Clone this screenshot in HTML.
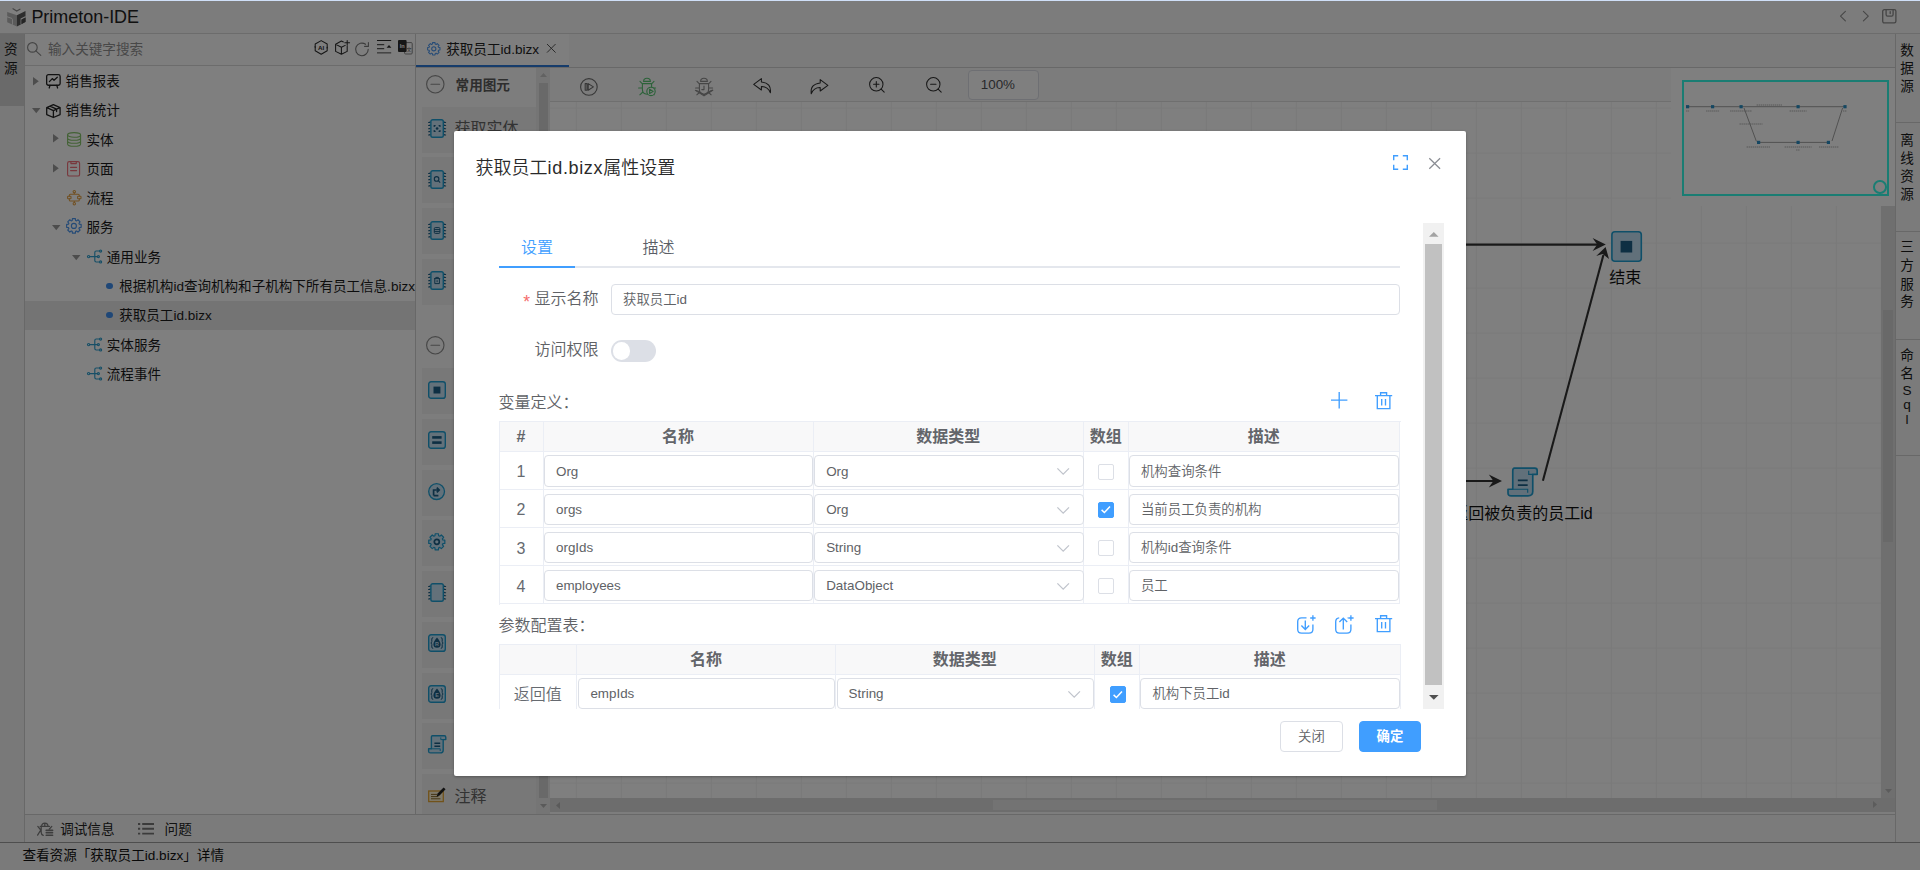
<!DOCTYPE html>
<html lang="zh-CN">
<head>
<meta charset="utf-8">
<title>Primeton-IDE</title>
<style>
*{box-sizing:border-box;margin:0;padding:0}
html,body{width:1920px;height:870px;overflow:hidden;background:#fff}
body{font-family:"Liberation Sans","Noto Sans CJK SC",sans-serif;font-size:13.6px;color:#333;position:relative}
.abs{position:absolute}
svg{display:block;overflow:visible}
/* ---------- base app ---------- */
#app{position:absolute;left:0;top:0;width:1920px;height:870px;background:#fff}
#topline{left:0;top:0;width:1920px;height:1px;background:#dfe9ff}
#titlebar{left:0;top:1px;width:1920px;height:33px;background:#f8f8f8;border-bottom:1px solid #d9d9d9}
#titlebar .name{left:31.4px;top:4px;font-size:17.95px;line-height:24px;color:#222;white-space:nowrap}
#lstrip{left:0;top:34px;width:25px;height:809px;background:#f3f3f3;border-right:1px solid #d0d0d0}
#lstrip .tab{left:-1px;top:0;width:25px;height:71.6px;background:#d5d5d5;text-align:center;font-size:13.6px;line-height:18.3px;padding-top:7.4px;color:#1a1a1a;padding-right:1.4px}
#tree{left:25px;top:34px;width:391px;height:781px;background:#fff;border-right:1px solid #d0d0d0}
#search{left:0;top:0;width:390px;height:32px;border-bottom:1px solid #d9d9d9;background:#fdfdfd}
#search .ph{left:23px;top:7.6px;font-size:13.6px;line-height:16px;color:#909090;white-space:nowrap}
.row{position:absolute;left:0;width:390px;height:29.3px;line-height:29.3px;white-space:nowrap;font-size:13.55px;color:#1a1a1a}
.row.sel{background:#e9e9e9}
.row .t{position:absolute;top:.9px}
.row .arr{position:absolute;top:0;width:0;height:0}
.row .ico{position:absolute}
.tri-r{width:0;height:0;border-left:6px solid #9a9a9a;border-top:4.5px solid transparent;border-bottom:4.5px solid transparent}
.tri-d{width:0;height:0;border-top:6px solid #9a9a9a;border-left:4.5px solid transparent;border-right:4.5px solid transparent}
.dot{position:absolute;width:6.7px;height:6.7px;border-radius:50%;background:#3f8fee}
#bottomtabs{left:25px;top:814px;width:1870px;height:29px;background:#f7f7f7;border-top:1px solid #d0d0d0}
#bottomtabs .t{position:absolute;top:5.8px;line-height:18px;font-size:13.6px;color:#222;white-space:nowrap}
#status{left:0;top:842px;width:1920px;height:28px;background:#f4f4f4;border-top:1.5px solid #9c9c9c}
#status .t{position:absolute;left:22.4px;top:4.4px;line-height:18px;font-size:13.6px;color:#111;white-space:nowrap}
#rstrip{left:1895px;top:34px;width:25px;height:809px;background:#f6f6f6;border-left:1px solid #d0d0d0}
#rstrip .v{position:absolute;left:1px;width:24px;text-align:center;font-size:13.6px;line-height:17.6px;color:#222}
#rstrip .sep{position:absolute;left:1px;width:24px;height:1px;background:#d0d0d0}
#edtabs{left:416px;top:34px;width:1479px;height:34px;background:#f6f6f6;border-bottom:1px solid #d0d0d0}
#edtabs .tab{position:absolute;left:0;top:0;width:153px;height:33px;background:#fdfdfd;border-bottom:2.5px solid #2d79d6}
#edtabs .tab .t{position:absolute;left:30.2px;top:6.8px;line-height:18px;font-size:13.6px;color:#222;white-space:nowrap}
#palette{left:416px;top:68px;width:120px;height:746px;background:#fafafa;overflow:hidden}
#palette .item{position:absolute;left:5.7px;width:120px;height:46px;background:#f1f1f1}
#palette .lbl{position:absolute;left:39px;font-size:14.5px;color:#444;white-space:nowrap;line-height:20px}
#pscroll{left:536px;top:68px;width:14.5px;height:746px;background:#ebebeb}
#pscroll .thumb{position:absolute;left:2.5px;top:14.5px;width:9.5px;height:715.5px;background:#d2d2d2}
#toolbar{left:550px;top:68px;width:1345px;height:33.5px;background:#f8f8f8;border-bottom:1px solid #dedede}
#canvas{left:550px;top:101.5px;width:1331px;height:696px;background-color:#fff;
 background-image:linear-gradient(to right,#f3f3f3 1px,transparent 1px),linear-gradient(to bottom,#f3f3f3 1px,transparent 1px);
 background-size:45px 45px;background-position:25.8px 5.6px}
#vscroll{left:1883px;top:101.5px;width:12px;height:696px;background:#ececec}
#hscroll{left:550px;top:797.5px;width:1333px;height:16.5px;background:#ececec}
#overlay{left:0;top:0;width:1920px;height:870px;background:rgba(0,0,0,.5)}
/* ---------- dialog ---------- */
#dlg{left:454px;top:131px;width:1012px;height:645px;background:#fff;border-radius:2px;box-shadow:0 1px 3px rgba(0,0,0,.3);font-family:"Liberation Sans","Noto Sans CJK SC",sans-serif}
#dlg .title{left:22px;top:22px;font-size:18px;line-height:26px;color:#222;white-space:nowrap;letter-spacing:0}
#dlg .pg{position:absolute;left:-454px;top:-131px;width:1920px;height:870px}
#dlg .pg{font-weight:350}
#dlg .pg *{position:absolute;white-space:nowrap}
.dtitle{left:475.6px;top:154.6px;font-size:18px;line-height:26px;color:#2a2a2a}
.dtab{font-size:16px;line-height:22px;top:236.5px;color:#5a5e66}
.dtab.on{color:#409eff}
.tabline{left:499px;top:266px;width:901px;height:2px;background:#e4e7ed}
.tabact{left:499px;top:265.8px;width:76px;height:2.6px;background:#409eff}
.flabel{font-size:16px;line-height:22px;color:#606266}
.inp{border:1px solid #dcdfe6;border-radius:4px;background:#fff;height:31.2px;font-size:13.4px;line-height:29.4px;color:#606266;padding-left:11px;overflow:hidden}
.switch{left:611px;top:340.3px;width:45px;height:21.4px;border-radius:11px;background:#dcdfe6}
.switch i{left:2px;top:2px;width:17.4px;height:17.4px;border-radius:50%;background:#fff}
#sc{left:490px;top:223px;width:933px;height:485.8px;overflow:hidden}
#sc .in{left:-490px;top:-223px;width:1920px;height:870px}
.sect{font-size:16px;line-height:22px;color:#606266;left:499px}
.tbl{background:#fff}
.vl{width:1px;background:#ebeef5;z-index:2}
.hl{height:1px;background:#ebeef5;z-index:2}
.th{background:#f8f8f9;border-right:1px solid #ebeef5;border-bottom:1px solid #ebeef5;font-weight:bold;font-size:16px;color:#63656a;text-align:center;line-height:31.4px;height:30.4px;top:0}
.td{border-right:1px solid #ebeef5;border-bottom:1px solid #ebeef5;font-size:16px;color:#666a70;text-align:center;padding-top:1.6px}
.cb{width:16.3px;height:16.3px;border:1px solid #dcdfe6;border-radius:2px;background:#fff}
.cb.on{background:#409eff;border-color:#409eff}
.btn{height:30.8px;border-radius:4px;font-size:13.4px;line-height:29px;text-align:center;top:721px}
.sbtrack{left:1423.2px;top:223px;width:20.6px;height:485.8px;background:#f1f1f1}
.sbthumb{left:1425.3px;top:244.2px;width:16.7px;height:440.8px;background:#c1c1c1}

</style>
</head>
<body>
<div id="app" class="abs">
    <div id="titlebar" class="abs"><div class="name abs">Primeton-IDE</div></div>
  <div id="lstrip" class="abs"><div class="tab abs">资<br>源</div></div>
  <div id="tree" class="abs">
    <div id="search" class="abs"><div class="ph abs">输入关键字搜索</div><svg class="abs" style="left:2.20px;top:8.40px" width="14.4" height="14" viewBox="0 0 14.4 14" fill="none" stroke-linecap="round" stroke-linejoin="round" stroke="#8a8a8a" stroke-width="1.15"><circle cx="5.4" cy="5.4" r="4.8"/><path d="M8.9 8.9L13.8 13.4"/></svg>
<svg class="abs" style="left:289.00px;top:5.80px" width="14.4" height="14.8" viewBox="0 0 14.4 14.8" fill="none" stroke-linecap="round" stroke-linejoin="round" stroke="#2a2a2a" stroke-width="1.05"><path d="M7.2 0.6L13.2 4V10.8L7.2 14.2L1.2 10.8V4Z"/><text x="7.2" y="9.6" font-size="6.2" font-weight="bold" text-anchor="middle" fill="#2a2a2a" stroke="none" font-family="Liberation Sans,sans-serif">AI</text><path d="M0.2 6.6L1.2 8.2L2.2 6.6ZM12.2 8.2L13.2 6.6L14.2 8.2Z" fill="#2a2a2a" stroke="none"/></svg>
<svg class="abs" style="left:309.80px;top:6.00px" width="14.6" height="14.8" viewBox="0 0 14.6 14.8" fill="none" stroke-linecap="round" stroke-linejoin="round" stroke="#2a2a2a" stroke-width="1.05"><path d="M8.4 1.9L6.4 1L0.6 4.2V11.4L6.4 14.2L12.2 11.4V6.2M0.8 4.4L6.4 7.2L10.2 5.4M6.4 7.2V14M12.2 0.4V5.2M9.8 2.8H14.6"/></svg>
<svg class="abs" style="left:330.40px;top:7.70px" width="14.4" height="14.2" viewBox="0 0 14.4 14.2" fill="none" stroke-linecap="round" stroke-linejoin="round" stroke="#787878" stroke-width="1.1"><path d="M13.2 7.4A6.3 6.3 0 1 1 10.6 2.3M13.4 0.6V4.4H9.6"/></svg>
<svg class="abs" style="left:352.00px;top:6.00px" width="14.4" height="14" viewBox="0 0 14.4 14" fill="none"><path d="M0 0.5H14.2" stroke="#2a2a2a" stroke-width="1"/><path d="M0 4.6H7.2M0 8.6H7.2" stroke="#555" stroke-width="1.1"/><path d="M0 12.8H14.2" stroke="#8a8a8a" stroke-width="1.6"/><path d="M9.6 7.7L12 5L14.4 7.7Z" fill="#2a2a2a"/></svg>
<svg class="abs" style="left:373.20px;top:6.00px" width="14.6" height="14.4" viewBox="0 0 14.6 14.4" ><rect x="6.6" y="2.6" width="7.6" height="11.4" rx="1" fill="#fff" stroke="#777" stroke-width=".9"/><rect x="0" y="0" width="8.6" height="12" rx="1" fill="#2c2c2c"/><text x="4.3" y="8.2" font-size="5.6" font-weight="bold" text-anchor="middle" fill="#fff" font-family="Liberation Sans,sans-serif">In</text><text x="10.9" y="11" font-size="5" text-anchor="middle" fill="#555" font-family="Liberation Sans,Noto Sans CJK SC,sans-serif">文</text></svg></div>
<div class="row" style="top:32.1px"><div class="t" style="left:40.6px">销售报表</div></div>
<svg class="abs" style="left:8.3px;top:43.0px" width="5.8" height="8.4" viewBox="0 0 5.8 8.4" ><path d="M0 0L5.8 4.2L0 8.4Z" fill="#9b9b9b"/></svg>
<svg class="abs" style="left:21.0px;top:39.5px" width="14.8" height="14.6" viewBox="0 0 14.8 14.6" fill="none" stroke-linecap="round" stroke-linejoin="round" stroke="#222" stroke-width="1.3"><rect x="0.65" y="0.65" width="13.5" height="10.6" rx="1.8"/><path d="M3.2 14L4 11.4M11.6 14L10.8 11.4M3.4 7.6L6.3 4.6L8 6.2L11.3 3.2"/></svg>
<div class="row" style="top:61.4px"><div class="t" style="left:40.6px">销售统计</div></div>
<svg class="abs" style="left:7.0px;top:74.0px" width="8.5" height="5.3" viewBox="0 0 8.5 5.3" ><path d="M0 0H8.5L4.25 5.3Z" fill="#9b9b9b"/></svg>
<svg class="abs" style="left:21.0px;top:69.8px" width="14.8" height="14.2" viewBox="0 0 14.8 14.2" fill="none" stroke-linecap="round" stroke-linejoin="round" stroke="#222" stroke-width="1.3"><path d="M7.4 0.7L14.1 3.6V10.6L7.4 13.5L0.7 10.6V3.6ZM0.9 3.7L7.4 6.6L13.9 3.7M7.4 6.6V13.3M3.9 2.2L10.6 5.2V7.6"/></svg>
<div class="row" style="top:90.7px"><div class="t" style="left:61.5px">实体</div></div>
<svg class="abs" style="left:28.4px;top:100.2px" width="5.8" height="8.4" viewBox="0 0 5.8 8.4" ><path d="M0 0L5.8 4.2L0 8.4Z" fill="#9b9b9b"/></svg>
<svg class="abs" style="left:41.9px;top:97.9px" width="14.2" height="14.8" viewBox="0 0 14.2 14.8" fill="none" stroke-linecap="round" stroke-linejoin="round" stroke="#86c46a" stroke-width="1.1"><ellipse cx="7.1" cy="2.9" rx="6.5" ry="2.3"/><path d="M0.6 2.9V11.9C0.6 13.2 3.5 14.2 7.1 14.2S13.6 13.2 13.6 11.9V2.9M0.6 5.9C0.6 7.2 3.5 8.2 7.1 8.2S13.6 7.2 13.6 5.9M0.6 8.9C0.6 10.2 3.5 11.2 7.1 11.2S13.6 10.2 13.6 8.9"/></svg>
<div class="row" style="top:120.0px"><div class="t" style="left:61.5px">页面</div></div>
<svg class="abs" style="left:28.4px;top:129.6px" width="5.8" height="8.4" viewBox="0 0 5.8 8.4" ><path d="M0 0L5.8 4.2L0 8.4Z" fill="#9b9b9b"/></svg>
<svg class="abs" style="left:42.2px;top:126.8px" width="13.2" height="15.6" viewBox="0 0 13.2 15.6" fill="none" stroke-linecap="round" stroke-linejoin="round" stroke="#f0707a" stroke-width="1.15"><rect x="0.6" y="0.6" width="12" height="14.4" rx="1.6"/><path d="M3.9 0.8V2.6H9.3V0.8M3.6 6.4H9.6M3.6 9.6H9.6"/></svg>
<div class="row" style="top:149.3px"><div class="t" style="left:61.5px">流程</div></div>
<svg class="abs" style="left:41.6px;top:156.1px" width="14.6" height="15.4" viewBox="0 0 14.6 15.4" fill="none" stroke-linecap="round" stroke-linejoin="round" stroke="#e3a043" stroke-width="1.05"><circle cx="7.3" cy="1.7" r="1.2"/><circle cx="7.3" cy="13.8" r="1.2"/><rect x="0.6" y="6.2" width="3.4" height="2.6" rx=".6"/><rect x="10.6" y="6.2" width="3.4" height="2.6" rx=".6"/><path d="M7.3 2.9V4.2M7.3 12.6V11.2M2.3 6.2V5.4Q2.3 4.3 3.4 4.3H11.2Q12.3 4.3 12.3 5.4V6.2M2.3 8.8V10Q2.3 11.1 3.4 11.1H11.2Q12.3 11.1 12.3 10V8.8"/></svg>
<div class="row" style="top:178.6px"><div class="t" style="left:61.5px">服务</div></div>
<svg class="abs" style="left:27.1px;top:191.2px" width="8.5" height="5.3" viewBox="0 0 8.5 5.3" ><path d="M0 0H8.5L4.25 5.3Z" fill="#9b9b9b"/></svg>
<svg class="abs" style="left:41.0px;top:184.4px" width="15.8" height="15.8" viewBox="0 0 15.8 15.8" fill="none" stroke-linecap="round" stroke-linejoin="round" stroke="#4b96ee" stroke-width="1.15"><path d="M6.22 2.45L6.43 0.65L9.37 0.65L9.58 2.45L10.56 2.86L11.99 1.73L14.07 3.81L12.94 5.24L13.35 6.22L15.15 6.43L15.15 9.37L13.35 9.58L12.94 10.56L14.07 11.99L11.99 14.07L10.56 12.94L9.58 13.35L9.37 15.15L6.43 15.15L6.22 13.35L5.24 12.94L3.81 14.07L1.73 11.99L2.86 10.56L2.45 9.58L0.65 9.37L0.65 6.43L2.45 6.22L2.86 5.24L1.73 3.81L3.81 1.73L5.24 2.86Z"/><circle cx="7.9" cy="7.9" r="2.5"/></svg>
<div class="row" style="top:207.9px"><div class="t" style="left:81.8px">通用业务</div></div>
<svg class="abs" style="left:47.0px;top:220.5px" width="8.5" height="5.3" viewBox="0 0 8.5 5.3" ><path d="M0 0H8.5L4.25 5.3Z" fill="#9b9b9b"/></svg>
<svg class="abs" style="left:62.0px;top:215.0px" width="15.2" height="15" viewBox="0 0 15.2 15" fill="none" stroke-linecap="round" stroke-linejoin="round" stroke="#2f9fce" stroke-width="1.15"><circle cx="1.6" cy="7.6" r="1.15"/><circle cx="13.6" cy="2" r="1.05"/><circle cx="11.4" cy="7.6" r="1.05"/><circle cx="13.6" cy="13" r="1.05"/><path d="M2.8 7.6H10.3M7.8 7.6V3.4Q7.8 2 9.2 2H12.5M7.8 7.6V11.6Q7.8 13 9.2 13H12.5"/></svg>
<div class="row" style="top:237.2px"><div class="t" style="left:94.2px">根据机构id查询机构和子机构下所有员工信息.bizx</div></div>
<div class="dot" style="left:81.0px;top:248.5px"></div>
<div class="row sel" style="top:266.5px"><div class="t" style="left:94.2px">获取员工id.bizx</div></div>
<div class="dot" style="left:81.0px;top:277.8px"></div>
<div class="row" style="top:295.8px"><div class="t" style="left:81.8px">实体服务</div></div>
<svg class="abs" style="left:62.0px;top:302.8px" width="15.2" height="15" viewBox="0 0 15.2 15" fill="none" stroke-linecap="round" stroke-linejoin="round" stroke="#2f9fce" stroke-width="1.15"><circle cx="1.6" cy="7.6" r="1.15"/><circle cx="13.6" cy="2" r="1.05"/><circle cx="11.4" cy="7.6" r="1.05"/><circle cx="13.6" cy="13" r="1.05"/><path d="M2.8 7.6H10.3M7.8 7.6V3.4Q7.8 2 9.2 2H12.5M7.8 7.6V11.6Q7.8 13 9.2 13H12.5"/></svg>
<div class="row" style="top:325.1px"><div class="t" style="left:81.8px">流程事件</div></div>
<svg class="abs" style="left:62.0px;top:332.1px" width="15.2" height="15" viewBox="0 0 15.2 15" fill="none" stroke-linecap="round" stroke-linejoin="round" stroke="#2f9fce" stroke-width="1.15"><circle cx="1.6" cy="7.6" r="1.15"/><circle cx="13.6" cy="2" r="1.05"/><circle cx="11.4" cy="7.6" r="1.05"/><circle cx="13.6" cy="13" r="1.05"/><path d="M2.8 7.6H10.3M7.8 7.6V3.4Q7.8 2 9.2 2H12.5M7.8 7.6V11.6Q7.8 13 9.2 13H12.5"/></svg>
  </div>
  <div id="edtabs" class="abs"><div class="tab"><div class="t">获取员工id.bizx</div></div></div>
  <div id="palette" class="abs"><svg class="abs" style="left:10.10px;top:6.90px" width="18.6" height="18.6" viewBox="0 0 18.6 18.6" fill="none" stroke-linecap="round" stroke-linejoin="round" stroke="#8e8e8e" stroke-width="1.15"><circle cx="9.3" cy="9.3" r="8.7"/><path d="M5 9.3H13.6"/></svg>
<div class="abs" style="left:39.6px;top:7.6px;font-size:13.6px;font-weight:bold;color:#5c5c5c;line-height:20px;white-space:nowrap">常用图元</div>
<div class="item" style="top:38.6px;height:46.0px"></div>
<svg class="abs" style="left:11.60px;top:51.10px" width="18.2" height="19" viewBox="0 0 18.2 19" ><g fill="#1c5f86"><path d="M0 3.20L2.6 2.20V3.90H0.2Z"/><path d="M18.2 3.20L15.6 2.20V3.90H18Z"/><path d="M0 6.33L2.6 5.33V7.03H0.2Z"/><path d="M18.2 6.33L15.6 5.33V7.03H18Z"/><path d="M0 9.46L2.6 8.46V10.16H0.2Z"/><path d="M18.2 9.46L15.6 8.46V10.16H18Z"/><path d="M0 12.59L2.6 11.59V13.29H0.2Z"/><path d="M18.2 12.59L15.6 11.59V13.29H18Z"/><path d="M0 15.72L2.6 14.72V16.42H0.2Z"/><path d="M18.2 15.72L15.6 14.72V16.42H18Z"/></g><rect x="2.9" y="0.7" width="12.4" height="17.6" rx="1.8" fill="#c6e2f4" stroke="#1f9fd2" stroke-width="1.4"/><g fill="none" stroke="#1c5f86" stroke-width="1.1"><path d="M6.2 8V6.6H7.6M10.6 6.6H12V8M12 11V12.4H10.6M7.6 12.4H6.2V11"/></g><circle cx="9.1" cy="9.5" r="1.3" fill="#1c5f86"/></svg>
<div class="item" style="top:89.3px;height:46.0px"></div>
<svg class="abs" style="left:11.60px;top:101.80px" width="18.2" height="19" viewBox="0 0 18.2 19" ><g fill="#1c5f86"><path d="M0 3.20L2.6 2.20V3.90H0.2Z"/><path d="M18.2 3.20L15.6 2.20V3.90H18Z"/><path d="M0 6.33L2.6 5.33V7.03H0.2Z"/><path d="M18.2 6.33L15.6 5.33V7.03H18Z"/><path d="M0 9.46L2.6 8.46V10.16H0.2Z"/><path d="M18.2 9.46L15.6 8.46V10.16H18Z"/><path d="M0 12.59L2.6 11.59V13.29H0.2Z"/><path d="M18.2 12.59L15.6 11.59V13.29H18Z"/><path d="M0 15.72L2.6 14.72V16.42H0.2Z"/><path d="M18.2 15.72L15.6 14.72V16.42H18Z"/></g><rect x="2.9" y="0.7" width="12.4" height="17.6" rx="1.8" fill="#c6e2f4" stroke="#1f9fd2" stroke-width="1.4"/><g fill="none" stroke="#1c5f86" stroke-width="1.1"><circle cx="8.6" cy="8.9" r="2.3"/><path d="M10.3 10.7L12.2 12.6"/></g></svg>
<div class="item" style="top:140.0px;height:46.0px"></div>
<svg class="abs" style="left:11.60px;top:152.50px" width="18.2" height="19" viewBox="0 0 18.2 19" ><g fill="#1c5f86"><path d="M0 3.20L2.6 2.20V3.90H0.2Z"/><path d="M18.2 3.20L15.6 2.20V3.90H18Z"/><path d="M0 6.33L2.6 5.33V7.03H0.2Z"/><path d="M18.2 6.33L15.6 5.33V7.03H18Z"/><path d="M0 9.46L2.6 8.46V10.16H0.2Z"/><path d="M18.2 9.46L15.6 8.46V10.16H18Z"/><path d="M0 12.59L2.6 11.59V13.29H0.2Z"/><path d="M18.2 12.59L15.6 11.59V13.29H18Z"/><path d="M0 15.72L2.6 14.72V16.42H0.2Z"/><path d="M18.2 15.72L15.6 14.72V16.42H18Z"/></g><rect x="2.9" y="0.7" width="12.4" height="17.6" rx="1.8" fill="#c6e2f4" stroke="#1f9fd2" stroke-width="1.4"/><g fill="none" stroke="#1c5f86" stroke-width="1"><rect x="6.3" y="6.6" width="5.6" height="5.8" rx="1"/><path d="M6.3 8.6H11.9M6.3 10.6H11.9"/></g></svg>
<div class="item" style="top:190.7px;height:46.0px"></div>
<svg class="abs" style="left:11.60px;top:203.20px" width="18.2" height="19" viewBox="0 0 18.2 19" ><g fill="#1c5f86"><path d="M0 3.20L2.6 2.20V3.90H0.2Z"/><path d="M18.2 3.20L15.6 2.20V3.90H18Z"/><path d="M0 6.33L2.6 5.33V7.03H0.2Z"/><path d="M18.2 6.33L15.6 5.33V7.03H18Z"/><path d="M0 9.46L2.6 8.46V10.16H0.2Z"/><path d="M18.2 9.46L15.6 8.46V10.16H18Z"/><path d="M0 12.59L2.6 11.59V13.29H0.2Z"/><path d="M18.2 12.59L15.6 11.59V13.29H18Z"/><path d="M0 15.72L2.6 14.72V16.42H0.2Z"/><path d="M18.2 15.72L15.6 14.72V16.42H18Z"/></g><rect x="2.9" y="0.7" width="12.4" height="17.6" rx="1.8" fill="#c6e2f4" stroke="#1f9fd2" stroke-width="1.4"/><g fill="none" stroke="#1c5f86" stroke-width="1"><path d="M6 7.6H12.2M7.8 7.4V6.4H10.4V7.4M6.8 7.8V12.6H11.4V7.8M9.1 9.2V11.2"/></g></svg>
<div class="lbl" style="left:38.6px;top:51.2px;font-size:16px;color:#666">获取实体</div>
<svg class="abs" style="left:9.90px;top:267.70px" width="18.6" height="18.6" viewBox="0 0 18.6 18.6" fill="none" stroke-linecap="round" stroke-linejoin="round" stroke="#8e8e8e" stroke-width="1.15"><circle cx="9.3" cy="9.3" r="8.7"/><path d="M5 9.3H13.6"/></svg>
<div class="item" style="top:300.3px;height:46.0px"></div>
<div class="item" style="top:351.0px;height:46.0px"></div>
<div class="item" style="top:401.7px;height:46.0px"></div>
<div class="item" style="top:452.4px;height:46.0px"></div>
<div class="item" style="top:503.1px;height:46.0px"></div>
<div class="item" style="top:553.8px;height:46.0px"></div>
<div class="item" style="top:604.5px;height:46.0px"></div>
<div class="item" style="top:655.2px;height:46.0px"></div>
<div class="item" style="top:705.9px;height:46.0px"></div>
<svg class="abs" style="left:11.70px;top:312.70px" width="18" height="18" viewBox="0 0 18 18" ><rect x="0.7" y="0.7" width="16.6" height="16.6" rx="2.4" fill="#c6e2f4" stroke="#1f9fd2" stroke-width="1.4"/><rect x="5.5" y="5.6" width="6.9" height="6.9" fill="#1c5f86"/></svg>
<svg class="abs" style="left:11.70px;top:363.40px" width="18" height="18" viewBox="0 0 18 18" ><rect x="0.7" y="0.7" width="16.6" height="16.6" rx="2.4" fill="#c6e2f4" stroke="#1f9fd2" stroke-width="1.4"/><rect x="4.2" y="5.1" width="9.4" height="2.6" fill="#1c5f86"/><rect x="4.2" y="10.3" width="9.4" height="2.6" fill="#1c5f86"/></svg>
<svg class="abs" style="left:12.00px;top:414.50px" width="17.2" height="17.2" viewBox="0 0 17.2 17.2" ><circle cx="8.6" cy="8.6" r="7.9" fill="#c6e2f4" stroke="#1f9fd2" stroke-width="1.3"/><path d="M5.6 12.6V7H10.2M8.8 4.6L11.2 7L8.8 9.4M5.6 12.6H10.4" fill="none" stroke="#1c5f86" stroke-width="1.7"/></svg>
<svg class="abs" style="left:11.80px;top:465.00px" width="17.6" height="17.6" viewBox="0 0 17.6 17.6" ><path d="M6.94 2.78L7.17 0.76L10.43 0.76L10.66 2.78L11.74 3.23L13.33 1.97L15.63 4.27L14.37 5.86L14.82 6.94L16.84 7.17L16.84 10.43L14.82 10.66L14.37 11.74L15.63 13.33L13.33 15.63L11.74 14.37L10.66 14.82L10.43 16.84L7.17 16.84L6.94 14.82L5.86 14.37L4.27 15.63L1.97 13.33L3.23 11.74L2.78 10.66L0.76 10.43L0.76 7.17L2.78 6.94L3.23 5.86L1.97 4.27L4.27 1.97L5.86 3.23Z" fill="#c6e2f4" stroke="#1f9fd2" stroke-width="1.2" stroke-linejoin="round"/><circle cx="8.8" cy="8.8" r="2.5" fill="#c6e2f4" stroke="#1c5f86" stroke-width="1.7"/></svg>
<svg class="abs" style="left:11.60px;top:515.10px" width="18.2" height="19" viewBox="0 0 18.2 19" ><g fill="#1c5f86"><path d="M0 3.20L2.6 2.20V3.90H0.2Z"/><path d="M18.2 3.20L15.6 2.20V3.90H18Z"/><path d="M0 6.33L2.6 5.33V7.03H0.2Z"/><path d="M18.2 6.33L15.6 5.33V7.03H18Z"/><path d="M0 9.46L2.6 8.46V10.16H0.2Z"/><path d="M18.2 9.46L15.6 8.46V10.16H18Z"/><path d="M0 12.59L2.6 11.59V13.29H0.2Z"/><path d="M18.2 12.59L15.6 11.59V13.29H18Z"/><path d="M0 15.72L2.6 14.72V16.42H0.2Z"/><path d="M18.2 15.72L15.6 14.72V16.42H18Z"/></g><rect x="2.9" y="0.7" width="12.4" height="17.6" rx="1.8" fill="#c6e2f4" stroke="#1f9fd2" stroke-width="1.4"/></svg>
<svg class="abs" style="left:11.70px;top:566.00px" width="18" height="18" viewBox="0 0 18 18" ><rect x="0.7" y="0.7" width="16.6" height="16.6" rx="2.4" fill="#c6e2f4" stroke="#1f9fd2" stroke-width="1.4"/><g fill="none" stroke="#1c5f86" stroke-width="1"><path d="M5.2 3.6Q3.8 3.6 3.8 5V7.6Q3.8 9 2.8 9Q3.8 9 3.8 10.4V13Q3.8 14.4 5.2 14.4M12.8 3.6Q14.2 3.6 14.2 5V7.6Q14.2 9 15.2 9Q14.2 9 14.2 10.4V13Q14.2 14.4 12.8 14.4"/></g><path d="M9 3.4C11 6 12.6 8 12.6 10.2A3.6 3.6 0 0 1 5.4 10.2C5.4 8 7 6 9 3.4Z" fill="#1c5f86"/><text x="9" y="12.4" font-size="5.4" font-weight="bold" text-anchor="middle" fill="#c6e2f4" font-family="Liberation Sans,sans-serif">R</text></svg>
<svg class="abs" style="left:11.70px;top:616.50px" width="18" height="18" viewBox="0 0 18 18" ><rect x="0.7" y="0.7" width="16.6" height="16.6" rx="2.4" fill="#c6e2f4" stroke="#1f9fd2" stroke-width="1.4"/><g fill="none" stroke="#1c5f86" stroke-width="1"><path d="M5.2 3.6Q3.8 3.6 3.8 5V7.6Q3.8 9 2.8 9Q3.8 9 3.8 10.4V13Q3.8 14.4 5.2 14.4M12.8 3.6Q14.2 3.6 14.2 5V7.6Q14.2 9 15.2 9Q14.2 9 14.2 10.4V13Q14.2 14.4 12.8 14.4"/></g><path d="M9 3.4C11 6 12.6 8 12.6 10.2A3.6 3.6 0 0 1 5.4 10.2C5.4 8 7 6 9 3.4Z" fill="#1c5f86"/><text x="9" y="12.4" font-size="5.4" font-weight="bold" text-anchor="middle" fill="#c6e2f4" font-family="Liberation Sans,sans-serif">E</text></svg>
<svg class="abs" style="left:11.80px;top:667.00px" width="18.4" height="18.6" viewBox="0 0 18.4 18.6" ><path d="M4.4 0.7H16.4Q17.8 0.7 17.8 2.2V4.6H15.2V15.2Q15.2 17.9 12.4 17.9H2.4Q0.6 17.9 0.6 16.2V13.8H3.4V2.4Q3.4 0.7 4.4 0.7Z" fill="#c6e2f4" stroke="#1f9fd2" stroke-width="1.4" stroke-linejoin="round"/><path d="M3.4 13.8H12.2V16M15.2 4.6H12.8V2.4" fill="none" stroke="#1f9fd2" stroke-width="1"/><path d="M6.4 8.3H12.2M6.4 11.2H12.2" stroke="#1c5f86" stroke-width="1.4"/></svg>
<svg class="abs" style="left:11.50px;top:719.20px" width="18.2" height="15.4" viewBox="0 0 18.2 15.4" ><rect x="0.7" y="4" width="14.6" height="10.6" fill="#fdf3d4" stroke="#e3a535" stroke-width="1.3"/><path d="M3 7.4H9M3 9.6H10.4M3 11.8H12.4" stroke="#8a6a2a" stroke-width="1"/><path d="M8.6 9.6L9.6 6.6L15.6 0.4L17.6 2.2L11.6 8.6Z" fill="#222"/></svg>
<div class="lbl" style="left:38.6px;top:719.0px;font-size:16px;color:#666">注释</div></div>
  <div id="pscroll" class="abs"><div class="thumb"></div></div>
  <div id="toolbar" class="abs"><svg class="abs" style="left:30.00px;top:10.00px" width="17.8" height="17.8" viewBox="0 0 17.8 17.8" fill="none" stroke-linecap="round" stroke-linejoin="round" stroke="#6e6e6e" stroke-width="1.1"><circle cx="8.9" cy="8.9" r="8.3"/><path d="M5.2 5.6V12.2H7V5.6ZM8.2 5.6V12.2L13.4 8.9Z"/></svg>
<svg class="abs" style="left:88.10px;top:9.90px" width="18.2" height="18.2" viewBox="0 0 18.2 18.2" fill="none" stroke-linecap="round" stroke-linejoin="round" stroke="#58c472" stroke-width="1.1"><path d="M5.6 3.4A3.4 3.2 0 0 1 12.4 3.4ZM4.4 5.6H13.6V11.6Q13.6 16.2 9 16.2Q4.4 16.2 4.4 11.6ZM2 3.4L4.4 5.8M16 3.4L13.6 5.8M0.6 10H4.4M17.6 10H13.6M1.8 16.8L4.9 14M16.2 16.8L13.1 14"/><circle cx="13" cy="13.4" r="4.2" fill="#f8f8f8"/><path d="M11.6 11.2V15.6L15.2 13.4Z"/></svg>
<svg class="abs" style="left:145.00px;top:9.90px" width="18.2" height="18.2" viewBox="0 0 18.2 18.2" fill="none" stroke-linecap="round" stroke-linejoin="round" stroke="#8c8c8c" stroke-width="1.1"><path d="M5.6 3.4A3.4 3.2 0 0 1 12.4 3.4ZM4.4 5.6H13.6V11.6Q13.6 16.2 9 16.2Q4.4 16.2 4.4 11.6ZM2 3.4L4.4 5.8M16 3.4L13.6 5.8M0.6 10H4.4M17.6 10H13.6M1.8 16.8L4.9 14M16.2 16.8L13.1 14"/><path d="M9 8V11.6H6.8M1.2 12.6L4 13.6L9 16.8L15.8 12.8L17.2 12.2" /><path d="M0.4 12.4L9 17.9L17.8 12.2" stroke="#8c8c8c"/></svg>
<svg class="abs" style="left:202.50px;top:10.40px" width="18.8" height="15.6" viewBox="0 0 18.8 15.6" fill="none" stroke-linecap="round" stroke-linejoin="round" stroke="#2e2e2e" stroke-width="1.05"><path d="M8.4 0.6L0.7 6.4L8.4 12V8.6Q14.6 8.4 17.4 14.8Q18.6 5 8.4 3.9Z"/></svg>
<svg class="abs" style="left:259.60px;top:11.40px" width="18.6" height="15.4" viewBox="0 0 18.6 15.4" fill="none" stroke-linecap="round" stroke-linejoin="round" stroke="#2e2e2e" stroke-width="1.05"><path d="M10.2 0.6L17.9 6.4L10.2 12V8.6Q4 8.4 1.2 14.8Q0 5 10.2 3.9Z"/></svg>
<svg class="abs" style="left:318.50px;top:9.30px" width="15.6" height="15.6" viewBox="0 0 15.6 15.6" fill="none" stroke-linecap="round" stroke-linejoin="round" stroke="#2e2e2e" stroke-width="1.05"><circle cx="7.3" cy="7.3" r="6.7"/><path d="M11.9 12L15.2 15.2M4.6 7.3H10M7.3 4.6V10"/></svg>
<svg class="abs" style="left:376.30px;top:9.30px" width="15.6" height="15.6" viewBox="0 0 15.6 15.6" fill="none" stroke-linecap="round" stroke-linejoin="round" stroke="#2e2e2e" stroke-width="1.05"><circle cx="7.3" cy="7.3" r="6.7"/><path d="M11.9 12L15.2 15.2M4.6 7.3H10"/></svg>
<div class="abs" style="left:418.4px;top:1.5px;width:71px;height:30px;border:1px solid #dcdfe6;border-radius:4px;background:#fff;font-size:13.4px;line-height:28.6px;color:#505256;padding-left:11.4px">100%</div></div>
  <div id="canvas" class="abs"><svg class="abs" style="left:0;top:0" width="1333" height="696" viewBox="0 0 1333 696"><path d="M890.0 142.6 L1048.0 142.6" stroke="#333" stroke-width="2.1" fill="none"/><path d="M1055.8 142.6 L1042.6 136.1 L1047.2 142.6 L1042.6 149.1 Z" fill="#333"/><path d="M992.9 378.8 L1053.4 153.1" stroke="#333" stroke-width="2.1" fill="none"/><path d="M1055.6 145.1 L1046.2 153.9 L1052.6 151.9 L1059.0 156.9 Z" fill="#333"/><path d="M890.0 379.0 L944.0 379.0" stroke="#333" stroke-width="2.1" fill="none"/><path d="M952.0 379.0 L938.8 372.5 L943.4 379.0 L938.8 385.5 Z" fill="#333"/><rect x="1061.9" y="129.7" width="29.4" height="29.6" rx="3" fill="#c3e0f4" stroke="#1f9fd2" stroke-width="1.6"/><rect x="1070.6" y="138.9" width="11.6" height="11.6" fill="#1c5f86"/></svg>
<svg class="abs" style="left:956.90px;top:365.60px" width="31.2" height="30" viewBox="0 0 18.4 18.6" preserveAspectRatio="none"><path d="M4.4 0.7H16.4Q17.8 0.7 17.8 2.2V4.6H15.2V15.2Q15.2 17.9 12.4 17.9H2.4Q0.6 17.9 0.6 16.2V13.8H3.4V2.4Q3.4 0.7 4.4 0.7Z" fill="#c3e0f4" stroke="#1f9fd2" stroke-width="1" stroke-linejoin="round"/><path d="M3.4 13.8H12.2V16M15.2 4.6H12.8V2.4" fill="none" stroke="#1f9fd2" stroke-width=".7"/><path d="M6.4 8.3H12.2M6.4 11.2H12.2" stroke="#1c5f86" stroke-width="1.1"/></svg>
<div class="abs" style="left:1059.2px;top:165.5px;font-size:16px;line-height:22px;color:#111;white-space:nowrap">结束</div>
<div class="abs" style="right:288.4px;top:401.9px;font-size:16px;line-height:22px;color:#111;white-space:nowrap">返回被负责的员工id</div></div>
      <div id="rstrip" class="abs"></div>
  <div id="bottomtabs" class="abs"><div class="t" style="left:35.2px">调试信息</div><div class="t" style="left:139.6px">问题</div></div>
  <div id="status" class="abs"><div class="t">查看资源「获取员工id.bizx」详情</div></div>
<svg class="abs" style="left:6.60px;top:7.00px" width="19" height="20" viewBox="0 0 19 20" ><path d="M0.3 4.6L9.8 0.4L18.4 3.8L9.95 8.2Z" fill="#ffffff"/><path d="M5.6 1.4L9.7 4.1L13.4 1.9" fill="none" stroke="#8c8c8c" stroke-width="1.2"/><path d="M0.2 5L9.95 8.3V19.5L0.2 15.3Z" fill="#b6b6b6"/><path d="M0 9.2L5.2 11V12.1L0 10.3Z" fill="#f8f8f8"/><path d="M5.1 12L6 12.4V17.8L5.1 17.4Z" fill="#f8f8f8"/><path d="M9.95 8.3L18.5 4V14.9L9.95 19.5Z" fill="#5a5a5a"/><path d="M13.6 11.4L18.6 8.9V10.3L14.4 12.4V16.9L13.6 17.3Z" fill="#f8f8f8"/><path d="M14.6 12.8L18.5 10.8V14.8L14.6 16.9Z" fill="#4a4a4a"/></svg>
<svg class="abs" style="left:1839.60px;top:10.80px" width="5.8" height="10.2" viewBox="0 0 5.8 10.2" fill="none" stroke-linecap="round" stroke-linejoin="round" stroke="#8e8e8e" stroke-width="1.1"><path d="M5.4 0.3L0.5 5.1L5.4 9.9"/></svg>
<svg class="abs" style="left:1862.60px;top:10.80px" width="5.8" height="10.2" viewBox="0 0 5.8 10.2" fill="none" stroke-linecap="round" stroke-linejoin="round" stroke="#8e8e8e" stroke-width="1.1"><path d="M0.4 0.3L5.3 5.1L0.4 9.9"/></svg>
<svg class="abs" style="left:1882.40px;top:8.90px" width="14.6" height="14.6" viewBox="0 0 14.6 14.6" fill="none" stroke-linecap="round" stroke-linejoin="round" stroke="#8a8a8a" stroke-width="1.3"><rect x="0.7" y="0.7" width="13.2" height="13.2" rx="1.6"/><path d="M4.1 0.9V5.4Q4.1 7.1 5.6 7.1H9.6Q11.1 7.1 11.1 5.4V0.9M8.2 2.6V4.6"/></svg>
<svg class="abs" style="left:427.00px;top:41.60px" width="13.6" height="13.6" viewBox="0 0 13.6 13.6" fill="none" stroke-linecap="round" stroke-linejoin="round" stroke="#4b96ee" stroke-width="1.05"><path d="M5.35 2.12L5.55 0.63L8.05 0.63L8.25 2.12L9.09 2.47L10.28 1.55L12.05 3.32L11.13 4.51L11.48 5.35L12.97 5.55L12.97 8.05L11.48 8.25L11.13 9.09L12.05 10.28L10.28 12.05L9.09 11.13L8.25 11.48L8.05 12.97L5.55 12.97L5.35 11.48L4.51 11.13L3.32 12.05L1.55 10.28L2.47 9.09L2.12 8.25L0.63 8.05L0.63 5.55L2.12 5.35L2.47 4.51L1.55 3.32L3.32 1.55L4.51 2.47Z"/><circle cx="6.8" cy="6.8" r="2.1"/></svg>
<svg class="abs" style="left:547.00px;top:44.20px" width="8.6" height="8.6" viewBox="0 0 8.6 8.6" fill="none" stroke-linecap="round" stroke-linejoin="round" stroke="#555" stroke-width="1"><path d="M0.3 0.3L8.3 8.3M8.3 0.3L0.3 8.3"/></svg>
<div class="abs" style="left:1671px;top:68px;width:224px;height:137.5px;background:#fff"></div>
<div class="abs" style="left:1682px;top:80px;width:207px;height:116px;border:2px solid #34fbe6"></div>
<div class="abs" style="left:1873px;top:180.2px;width:13.6px;height:13.6px;border:2px solid #34fbe6;border-radius:50%;background:#fff"></div>
<svg class="abs" style="left:0;top:0" width="1920" height="220" viewBox="0 0 1920 220"><path d="M1688 106.7H1845M1744 108L1756.4 141.4M1759 142.4H1828M1832 141L1842.6 108" fill="none" stroke="#555" stroke-width=".55"/><rect x="1686.0" y="105.1" width="3.2" height="3.2" fill="#2a8fc4"/><rect x="1711.0" y="105.1" width="3.2" height="3.2" fill="#2a8fc4"/><rect x="1739.5" y="105.1" width="3.2" height="3.2" fill="#2a8fc4"/><rect x="1796.5" y="105.1" width="3.2" height="3.2" fill="#2a8fc4"/><rect x="1843.4" y="105.1" width="3.2" height="3.2" fill="#2a8fc4"/><rect x="1757.0" y="140.8" width="3.2" height="3.2" fill="#2a8fc4"/><rect x="1796.5" y="140.8" width="3.2" height="3.2" fill="#2a8fc4"/><rect x="1826.8" y="140.8" width="3.2" height="3.2" fill="#2a8fc4"/><path d="M1686.1 111.0H1689.1" stroke="#999" stroke-width=".8" stroke-dasharray="1.4 .6"/><path d="M1706.1 111.0H1719.1" stroke="#999" stroke-width=".8" stroke-dasharray="1.4 .6"/><path d="M1730.1 111.0H1752.1" stroke="#999" stroke-width=".8" stroke-dasharray="1.4 .6"/><path d="M1789.6 111.0H1806.6" stroke="#999" stroke-width=".8" stroke-dasharray="1.4 .6"/><path d="M1843.0 111.0H1847.0" stroke="#999" stroke-width=".8" stroke-dasharray="1.4 .6"/><path d="M1746.6 147.0H1770.6" stroke="#999" stroke-width=".8" stroke-dasharray="1.4 .6"/><path d="M1784.6 147.0H1811.6" stroke="#999" stroke-width=".8" stroke-dasharray="1.4 .6"/><path d="M1796.1 150.0H1800.1" stroke="#999" stroke-width=".8" stroke-dasharray="1.4 .6"/><path d="M1819.0 147.0H1839.0" stroke="#999" stroke-width=".8" stroke-dasharray="1.4 .6"/><path d="M1756.6 105.0H1782.6" stroke="#999" stroke-width=".8" stroke-dasharray="1.4 .6"/><path d="M1739.5 124.0H1762.5" stroke="#999" stroke-width=".8" stroke-dasharray="1.4 .6"/></svg>
<div class="abs" style="left:1895px;top:41.5px;width:24px;height:18px;line-height:18px;text-align:center;font-size:13.6px;color:#1a1a1a">数</div>
<div class="abs" style="left:1895px;top:59.7px;width:24px;height:18px;line-height:18px;text-align:center;font-size:13.6px;color:#1a1a1a">据</div>
<div class="abs" style="left:1895px;top:77.9px;width:24px;height:18px;line-height:18px;text-align:center;font-size:13.6px;color:#1a1a1a">源</div>
<div class="abs" style="left:1895px;top:131.8px;width:24px;height:18px;line-height:18px;text-align:center;font-size:13.6px;color:#1a1a1a">离</div>
<div class="abs" style="left:1895px;top:150.1px;width:24px;height:18px;line-height:18px;text-align:center;font-size:13.6px;color:#1a1a1a">线</div>
<div class="abs" style="left:1895px;top:168.4px;width:24px;height:18px;line-height:18px;text-align:center;font-size:13.6px;color:#1a1a1a">资</div>
<div class="abs" style="left:1895px;top:186.4px;width:24px;height:18px;line-height:18px;text-align:center;font-size:13.6px;color:#1a1a1a">源</div>
<div class="abs" style="left:1895px;top:238.4px;width:24px;height:18px;line-height:18px;text-align:center;font-size:13.6px;color:#1a1a1a">三</div>
<div class="abs" style="left:1895px;top:256.6px;width:24px;height:18px;line-height:18px;text-align:center;font-size:13.6px;color:#1a1a1a">方</div>
<div class="abs" style="left:1895px;top:275.6px;width:24px;height:18px;line-height:18px;text-align:center;font-size:13.6px;color:#1a1a1a">服</div>
<div class="abs" style="left:1895px;top:293.4px;width:24px;height:18px;line-height:18px;text-align:center;font-size:13.6px;color:#1a1a1a">务</div>
<div class="abs" style="left:1895px;top:347.2px;width:24px;height:18px;line-height:18px;text-align:center;font-size:13.6px;color:#1a1a1a">命</div>
<div class="abs" style="left:1895px;top:365.4px;width:24px;height:18px;line-height:18px;text-align:center;font-size:13.6px;color:#1a1a1a">名</div>
<div class="abs" style="left:1895px;top:381.8px;width:24px;height:18px;line-height:18px;text-align:center;font-size:13.6px;color:#1a1a1a">S</div>
<div class="abs" style="left:1895px;top:396.2px;width:24px;height:18px;line-height:18px;text-align:center;font-size:13.6px;color:#1a1a1a">q</div>
<div class="abs" style="left:1895px;top:411.0px;width:24px;height:18px;line-height:18px;text-align:center;font-size:13.6px;color:#1a1a1a">l</div>
<div class="abs" style="left:1896px;top:122.4px;width:24px;height:1px;background:#d0d0d0"></div>
<div class="abs" style="left:1896px;top:231.0px;width:24px;height:1px;background:#d0d0d0"></div>
<div class="abs" style="left:1896px;top:339.0px;width:24px;height:1px;background:#d0d0d0"></div>
<div class="abs" style="left:1896px;top:455.4px;width:24px;height:1px;background:#d0d0d0"></div>
<div class="abs" style="left:1881px;top:205.5px;width:14.4px;height:592.5px;background:#dedede"></div>
<div class="abs" style="left:1883.3px;top:310px;width:9.6px;height:232px;background:#d2d2d2"></div>
<svg class="abs" style="left:1884.60px;top:788.60px" width="7" height="4" viewBox="0 0 7 4" ><path d="M0 0H7L3.5 4Z" fill="#b8b8b8"/></svg>
<div class="abs" style="left:550px;top:797.8px;width:1345px;height:14px;background:#dadada"></div>
<div class="abs" style="left:993px;top:800px;width:444px;height:9.6px;background:#e6e6e6"></div>
<svg class="abs" style="left:555.60px;top:802.00px" width="4" height="7" viewBox="0 0 4 7" ><path d="M4 0V7L0 3.5Z" fill="#b4b4b4"/></svg>
<svg class="abs" style="left:539.60px;top:803.60px" width="7" height="4" viewBox="0 0 7 4" ><path d="M0 0H7L3.5 4Z" fill="#b4b4b4"/></svg>
<svg class="abs" style="left:539.60px;top:73.00px" width="7" height="4" viewBox="0 0 7 4" ><path d="M0 4H7L3.5 0Z" fill="#c4c4c4"/></svg>
<div class="abs" style="left:550px;top:811.5px;width:1345px;height:2.5px;background:#fafafa"></div>
<svg class="abs" style="left:1872.60px;top:801.00px" width="4" height="7" viewBox="0 0 4 7" ><path d="M0 0V7L4 3.5Z" fill="#b8b8b8"/></svg>
<svg class="abs" style="left:37.00px;top:821.80px" width="16" height="15" viewBox="0 0 16 15" fill="none" stroke-linecap="round" stroke-linejoin="round" stroke="#7a7a7a" stroke-width="1.25"><path d="M4.6 4.4A3.2 3.4 0 0 1 11 4.4M7.8 1.2V4.2M3.2 4.4H12.4M4.2 4.6V10.6Q4.2 12.6 6.2 13.4M0.8 4.4L3.8 8L0.6 13.2M14.8 4.4L12.2 7.2"/><path d="M9.2 8.4H15.6M9.2 10.8H15.6M9.2 13.2H15.6" stroke-width="1.6"/></svg>
<svg class="abs" style="left:137.90px;top:823.20px" width="16" height="11.6" viewBox="0 0 16 11.6" fill="none" stroke="#777" stroke-width="1.9"><path d="M0 1H2.2M0 5.8H2.2M0 10.6H2.2M4.2 1H16M4.2 5.8H16M4.2 10.6H16"/></svg>
</div>
<div id="overlay" class="abs"></div>
<div class="abs" style="left:0;top:0;width:1920px;height:1.2px;background:#cfdff8"></div>
<div id="dlg" class="abs"><div class="pg"><div class="dtitle">获取员工<span style="position:static;letter-spacing:.65px;font-weight:400">id.bizx</span>属性设置</div>
<svg style="left:1392.6px;top:155px" width="15" height="15" viewBox="0 0 15 15" fill="none" stroke="#409eff" stroke-width="1.4"><path d="M0.7 5.2V0.7H5.2M9.8 0.7H14.3V5.2M14.3 9.8V14.3H9.8M5.2 14.3H0.7V9.8"/></svg>
<svg style="left:1429.2px;top:158.2px" width="11.4" height="11" viewBox="0 0 11.4 11" fill="none" stroke="#8a8d93" stroke-width="1.25"><path d="M0.3 0.3L11.1 10.7M11.1 0.3L0.3 10.7"/></svg>
<div id="sc"><div class="in">
<div class="dtab on" style="left:521px">设置</div><div class="dtab" style="left:642.6px">描述</div>
<div class="tabline"></div><div class="tabact"></div>
<div class="flabel" style="left:523.2px;top:290.5px;color:#f56c6c;font-size:17.5px">*</div>
<div class="flabel" style="left:534.6px;top:288px">显示名称</div>
<div class="inp" style="left:611px;top:284px;width:789px">获取员工id</div>
<div class="flabel" style="left:534.6px;top:338.5px">访问权限</div>
<div class="switch"><i></i></div>
<div class="sect" style="top:392.4px;left:498.4px">变量定义：</div>
<svg style="left:1331.4px;top:392.3px" width="16.4" height="16.4" viewBox="0 0 16.4 16.4" fill="none" stroke="#409eff" stroke-width="1.35"><path d="M8.2 0V16.4M0 8.2H16.4"/></svg>
<svg style="left:1375px;top:391.8px" width="17.2" height="17.4" viewBox="0 0 17.2 17.4" fill="none" stroke="#409eff" stroke-width="1.35"><path d="M0 3.6H17.2M5.6 3.4V0.7H11.6V3.4M2.3 3.8V16.7H14.9V3.8M6.7 7V13.4M10.5 7V13.4"/></svg>
<div class="tbl" style="left:499.4px;top:421.2px;width:900.6px;height:184.20000000000002px">
<div class="vl" style="left:0;top:0;height:184.20000000000002px"></div><div class="hl" style="left:0;top:0;width:901.2px"></div>
<div class="th" style="left:0px;width:44.2px">#</div>
<div class="th" style="left:44.2px;width:270.1px">名称</div>
<div class="th" style="left:314.3px;width:270.1px">数据类型</div>
<div class="th" style="left:584.4px;width:45px">数组</div>
<div class="th" style="left:629.4px;width:271.2px">描述</div>
<div class="td" style="left:0px;top:30.4px;width:44.2px;height:38.2px;line-height:37.2px">1</div>
<div class="td" style="left:44.2px;top:30.4px;width:270.1px;height:38.2px;line-height:37.2px"></div>
<div class="td" style="left:314.3px;top:30.4px;width:270.1px;height:38.2px;line-height:37.2px"></div>
<div class="td" style="left:584.4px;top:30.4px;width:45px;height:38.2px;line-height:37.2px"></div>
<div class="td" style="left:629.4px;top:30.4px;width:271.2px;height:38.2px;line-height:37.2px"></div>
<div class="inp" style="left:44.6px;top:34.0px;width:269.4px;height:32.2px;line-height:31.6px">Org</div>
<div class="inp" style="left:314.8px;top:34.0px;width:269.4px;height:32.2px;line-height:31.6px">Org</div>
<svg style="left:558px;top:46.8px" width="12.4" height="6.8" viewBox="0 0 12.4 6.8" fill="none" stroke="#c0c4cc" stroke-width="1.25"><path d="M0.4 0.4L6.2 6.2L12 0.4"/></svg>
<div class="cb" style="left:598.3px;top:42.8px"></div>
<div class="inp" style="left:629.6px;top:34.0px;width:270.2px;height:32.2px;line-height:31.6px">机构查询条件</div>
<div class="td" style="left:0px;top:68.6px;width:44.2px;height:38.2px;line-height:37.2px">2</div>
<div class="td" style="left:44.2px;top:68.6px;width:270.1px;height:38.2px;line-height:37.2px"></div>
<div class="td" style="left:314.3px;top:68.6px;width:270.1px;height:38.2px;line-height:37.2px"></div>
<div class="td" style="left:584.4px;top:68.6px;width:45px;height:38.2px;line-height:37.2px"></div>
<div class="td" style="left:629.4px;top:68.6px;width:271.2px;height:38.2px;line-height:37.2px"></div>
<div class="inp" style="left:44.6px;top:72.6px;width:269.4px">orgs</div>
<div class="inp" style="left:314.8px;top:72.6px;width:269.4px">Org</div>
<svg style="left:558px;top:85.39999999999999px" width="12.4" height="6.8" viewBox="0 0 12.4 6.8" fill="none" stroke="#c0c4cc" stroke-width="1.25"><path d="M0.4 0.4L6.2 6.2L12 0.4"/></svg>
<div class="cb on" style="left:598.3px;top:80.6px"><svg style="left:2.6px;top:3.6px" width="9.6" height="7.4" viewBox="0 0 9.6 7.4" fill="none" stroke="#fff" stroke-width="1.5"><path d="M0.6 3.9L3.4 6.5L9 0.6"/></svg></div>
<div class="inp" style="left:629.6px;top:72.6px;width:270.2px">当前员工负责的机构</div>
<div class="td" style="left:0px;top:106.80000000000001px;width:44.2px;height:38.2px;line-height:37.2px">3</div>
<div class="td" style="left:44.2px;top:106.80000000000001px;width:270.1px;height:38.2px;line-height:37.2px"></div>
<div class="td" style="left:314.3px;top:106.80000000000001px;width:270.1px;height:38.2px;line-height:37.2px"></div>
<div class="td" style="left:584.4px;top:106.80000000000001px;width:45px;height:38.2px;line-height:37.2px"></div>
<div class="td" style="left:629.4px;top:106.80000000000001px;width:271.2px;height:38.2px;line-height:37.2px"></div>
<div class="inp" style="left:44.6px;top:110.80000000000001px;width:269.4px">orgIds</div>
<div class="inp" style="left:314.8px;top:110.80000000000001px;width:269.4px">String</div>
<svg style="left:558px;top:123.60000000000001px" width="12.4" height="6.8" viewBox="0 0 12.4 6.8" fill="none" stroke="#c0c4cc" stroke-width="1.25"><path d="M0.4 0.4L6.2 6.2L12 0.4"/></svg>
<div class="cb" style="left:598.3px;top:118.80000000000001px"></div>
<div class="inp" style="left:629.6px;top:110.80000000000001px;width:270.2px">机构id查询条件</div>
<div class="td" style="left:0px;top:145.0px;width:44.2px;height:38.2px;line-height:37.2px">4</div>
<div class="td" style="left:44.2px;top:145.0px;width:270.1px;height:38.2px;line-height:37.2px"></div>
<div class="td" style="left:314.3px;top:145.0px;width:270.1px;height:38.2px;line-height:37.2px"></div>
<div class="td" style="left:584.4px;top:145.0px;width:45px;height:38.2px;line-height:37.2px"></div>
<div class="td" style="left:629.4px;top:145.0px;width:271.2px;height:38.2px;line-height:37.2px"></div>
<div class="inp" style="left:44.6px;top:149.0px;width:269.4px">employees</div>
<div class="inp" style="left:314.8px;top:149.0px;width:269.4px">DataObject</div>
<svg style="left:558px;top:161.8px" width="12.4" height="6.8" viewBox="0 0 12.4 6.8" fill="none" stroke="#c0c4cc" stroke-width="1.25"><path d="M0.4 0.4L6.2 6.2L12 0.4"/></svg>
<div class="cb" style="left:598.3px;top:157.0px"></div>
<div class="inp" style="left:629.6px;top:149.0px;width:270.2px">员工</div>
</div>
<div class="sect" style="top:615.2px;left:498.6px">参数配置表：</div>
<svg style="left:1297.4px;top:615px" width="19" height="18.8" viewBox="0 0 19 18.8" fill="none" stroke="#409eff" stroke-width="1.35"><path d="M9.5 2.9H4.6Q0.7 2.9 0.7 6.8V14.2Q0.7 18.1 4.6 18.1H12Q15.9 18.1 15.9 14.2V9.4M8.3 5.6V14.4M4.4 10.6L8.3 14.5L12.2 10.6M15.9 0.3V5.7M13.2 3H18.6"/></svg>
<svg style="left:1335.4px;top:615px" width="19" height="18.8" viewBox="0 0 19 18.8" fill="none" stroke="#409eff" stroke-width="1.35"><path d="M4.2 2.9Q0.7 3.2 0.7 6.8V14.2Q0.7 18.1 4.6 18.1H12Q15.9 18.1 15.9 14.2V9.4M12.4 2.9H12M8.3 14.4V3.2M4.4 7L8.3 3.1L12.2 7M15.9 0.3V5.7M13.2 3H18.6"/></svg>
<svg style="left:1374.9px;top:614.6px" width="17.2" height="17.4" viewBox="0 0 17.2 17.4" fill="none" stroke="#409eff" stroke-width="1.35"><path d="M0 3.6H17.2M5.6 3.4V0.7H11.6V3.4M2.3 3.8V16.7H14.9V3.8M6.7 7V13.4M10.5 7V13.4"/></svg>
<div class="tbl" style="left:499.4px;top:644.4px;width:900.6px;height:80px">
<div class="vl" style="left:0;top:0;height:80px"></div><div class="hl" style="left:0;top:0;width:901.2px"></div>
<div class="th" style="left:0px;width:77.8px"></div>
<div class="th" style="left:77.8px;width:258.4px">名称</div>
<div class="th" style="left:336.2px;width:259.2px">数据类型</div>
<div class="th" style="left:595.4px;width:45.2px">数组</div>
<div class="th" style="left:640.6px;width:260.6px">描述</div>
<div class="td" style="left:0px;top:30.4px;width:77.8px;height:38.2px;line-height:37.2px">返回值</div>
<div class="td" style="left:77.8px;top:30.4px;width:258.4px;height:38.2px;line-height:37.2px"></div>
<div class="td" style="left:336.2px;top:30.4px;width:259.2px;height:38.2px;line-height:37.2px"></div>
<div class="td" style="left:595.4px;top:30.4px;width:45.2px;height:38.2px;line-height:37.2px"></div>
<div class="td" style="left:640.6px;top:30.4px;width:260.6px;height:38.2px;line-height:37.2px"></div>
<div class="inp" style="left:79px;top:33.8px;width:256.6px">empIds</div>
<div class="inp" style="left:337.2px;top:33.8px;width:257.6px">String</div>
<svg style="left:568.4px;top:46.4px" width="12.4" height="6.8" viewBox="0 0 12.4 6.8" fill="none" stroke="#c0c4cc" stroke-width="1.25"><path d="M0.4 0.4L6.2 6.2L12 0.4"/></svg>
<div class="cb on" style="left:610.2px;top:42.0px"><svg style="left:2.6px;top:3.6px" width="9.6" height="7.4" viewBox="0 0 9.6 7.4" fill="none" stroke="#fff" stroke-width="1.5"><path d="M0.6 3.9L3.4 6.5L9 0.6"/></svg></div>
<div class="inp" style="left:641px;top:33.8px;width:259.4px">机构下员工id</div>
</div>
</div></div>
<div class="sbtrack"></div><div class="sbthumb"></div>
<svg style="left:1428.6px;top:232.2px" width="9.6" height="4.8" viewBox="0 0 9.6 4.8"><path d="M0 4.8L4.8 0L9.6 4.8Z" fill="#a3a3a3"/></svg>
<svg style="left:1428.8px;top:695.2px" width="9.6" height="4.8" viewBox="0 0 9.6 4.8"><path d="M0 0L4.8 4.8L9.6 0Z" fill="#505050"/></svg>
<div class="btn" style="left:1280.2px;width:62.6px;border:1px solid #dcdfe6;color:#606266;background:#fff">关闭</div>
<div class="btn" style="left:1359px;width:61.8px;border:1px solid #409eff;background:#409eff;color:#fff;font-weight:bold">确定</div></div></div>
</body>
</html>
